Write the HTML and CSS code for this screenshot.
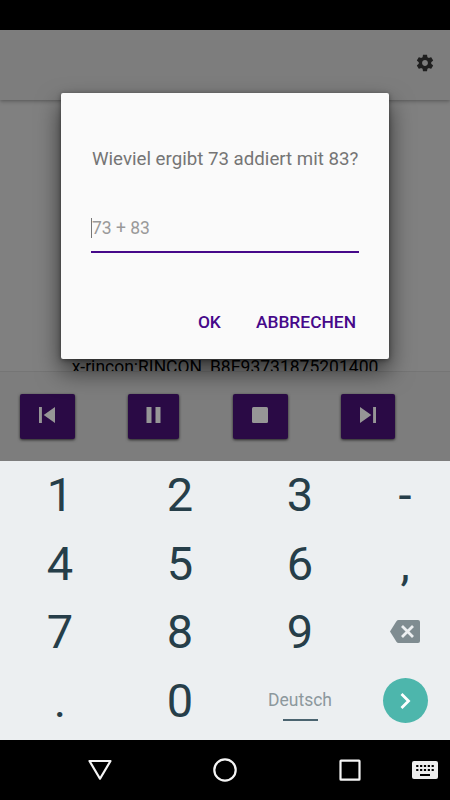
FILE: index.html
```html
<!DOCTYPE html>
<html lang="de">
<head>
	<meta charset="UTF-8">
	<title>Player</title>
	<link rel="stylesheet" href="styles.css">
</head>
<body>
	<div class="phone">
		<div class="statusbar"></div>

		<div class="app">
			<div class="header">
				<svg class="gear" viewBox="0 0 24 24"><path d="M19.43 12.98c.04-.32.07-.64.07-.98s-.03-.66-.07-.98l2.11-1.65c.19-.15.24-.42.12-.64l-2-3.46c-.12-.22-.39-.3-.61-.22l-2.49 1c-.52-.4-1.08-.73-1.69-.98l-.38-2.65C14.46 2.18 14.25 2 14 2h-4c-.25 0-.46.18-.49.42l-.38 2.65c-.61.25-1.17.59-1.69.98l-2.49-1c-.23-.09-.49 0-.61.22l-2 3.46c-.13.22-.07.49.12.64l2.11 1.65c-.04.32-.07.65-.07.98s.03.66.07.98l-2.11 1.65c-.19.15-.24.42-.12.64l2 3.46c.12.22.39.3.61.22l2.49-1c.52.4 1.08.73 1.69.98l.38 2.65c.03.24.24.42.49.42h4c.25 0 .46-.18.49-.42l.38-2.65c.61-.25 1.17-.59 1.69-.98l2.49 1c.23.09.49 0 .61-.22l2-3.46c.12-.22.07-.49-.12-.64l-2.11-1.65zM12 15.5c-1.93 0-3.5-1.57-3.5-3.5s1.57-3.5 3.5-3.5 3.5 1.57 3.5 3.5-1.57 3.5-3.5 3.5z"/></svg>
			</div>
			<div class="content">
				<p class="track">x-rincon:RINCON_B8E93731875201400</p>
			</div>
			<div class="controls">
				<button type="button" class="prev"><svg viewBox="0 0 24 24"><path d="M3 4h2.900v16H3zM7.700 12 19 20V4z"/></svg></button>
				<button type="button" class="pause"><svg viewBox="0 0 24 24"><path d="M4.500 4h5v16h-5zM13.500 4h5v16h-5z"/></svg></button>
				<button type="button" class="stop"><svg viewBox="0 0 24 24"><rect x="4" y="4" width="16" height="16" rx="1.5"/></svg></button>
				<button type="button" class="next"><svg viewBox="0 0 24 24"><path d="M4 20l11.300-8L4 4zM17.100 4H20v16h-2.900z"/></svg></button>
			</div>

			<div class="scrim">
				<div class="dialog">
					<p class="question">Wieviel ergibt 73 addiert mit 83?</p>
					<div class="field"><span class="caret"></span><span class="hint">73 + 83</span></div>
					<div class="actions">
						<span class="ok">OK</span>
						<span class="cancel">ABBRECHEN</span>
					</div>
				</div>
			</div>
		</div>

		<div class="keyboard">
			<div class="key">1</div>
			<div class="key">2</div>
			<div class="key">3</div>
			<div class="key">-</div>
			<div class="key">4</div>
			<div class="key">5</div>
			<div class="key">6</div>
			<div class="key">,</div>
			<div class="key">7</div>
			<div class="key">8</div>
			<div class="key">9</div>
			<div class="key"><svg class="delete" viewBox="0 0 30 23"><path fill="#7f8c91" d="M8.500 0H28a2 2 0 0 1 2 2v19a2 2 0 0 1-2 2H8.500Q7.300 23 6.600 22L0 11.500 6.600 1Q7.300 0 8.500 0z"/><path stroke="#eceff1" stroke-width="2.800" d="M12 6l11 11M23 6L12 17"/></svg></div>
			<div class="key">.</div>
			<div class="key">0</div>
			<div class="key space"><span class="lang">Deutsch</span></div>
			<div class="key"><span class="enter"><svg viewBox="0 0 24 24"><path fill="none" stroke="#fff" stroke-width="2.800" d="M8.500 5l7 7-7 7"/></svg></span></div>
		</div>

		<div class="navbar">
			<svg class="back" viewBox="0 0 26 26"><path d="M2.500 4h21L13 21.700z"/></svg>
			<svg class="home" viewBox="0 0 26 26"><circle cx="13" cy="13" r="10.700"/></svg>
			<svg class="recent" viewBox="0 0 26 26"><rect x="3.500" y="3.700" width="19" height="19" rx=".5"/></svg>
			<svg class="ime" viewBox="0 0 26 18"><rect width="26" height="18" rx="2" fill="#eee"/><path stroke="#000" stroke-width="2.200" stroke-dasharray="2.200 1.650" d="M4.200 5h17.800M4.200 9h17.800"/><path stroke="#000" stroke-width="2" d="M8 14h10"/></svg>
		</div>
	</div>
</body>
</html>
```
FILE: styles.css
```css
body {
	margin: 0;
	font-family: Roboto, "Liberation Sans", sans-serif;
}
p {
	margin: 0;
}
.phone {
	width: 450px;
	height: 800px;
	display: flex;
	flex-direction: column;
	overflow: hidden;
	background: #000;
}
.statusbar {
	height: 30px;
}
/* app behind the dialog */
.app {
	position: relative;
	height: 431px;
	display: flex;
	flex-direction: column;
	overflow: hidden;
	background: #d5d5d5;
}
.header {
	height: 70px;
	box-sizing: border-box;
	padding-right: 15px;
	display: flex;
	align-items: center;
	justify-content: flex-end;
	background: #d0d0d0;
	box-shadow: 0 1px 4px rgba(0,0,0,.35);
}
.gear {
	width: 20px;
	height: 20px;
	margin-top: -4px;
	fill: #353535;
}
.content {
	height: 271px;
	display: flex;
	align-items: flex-end;
	justify-content: center;
	overflow: hidden;
}
.track {
	height: 15px;
	line-height: 22px;
	font-size: 17.5px;
	white-space: nowrap;
}
.controls {
	height: 90px;
	box-sizing: border-box;
	padding: 22px 55px 22px 20px;
	display: flex;
	justify-content: space-between;
	background: #d0d0d0;
	border-top: 1px solid #c4c4c4;
}
.controls button {
	width: 55px;
	height: 45px;
	padding: 0 0 4px;
	border: 0;
	border-radius: 2px;
	display: flex;
	align-items: center;
	justify-content: center;
	background: #461273;
	box-shadow: 0 1px 3px rgba(0,0,0,.7);
}
.controls .pause {
	width: 51px;
}
.controls .next {
	width: 54px;
}
.controls svg {
	width: 24px;
	height: 24px;
	fill: #fbfbfb;
}
/* dimmed layer with the dialog */
.scrim {
	position: absolute;
	top: 0;
	left: 0;
	right: 0;
	bottom: 0;
	padding-top: 63px;
	background: rgba(0,0,0,.4);
}
.dialog {
	width: 328px;
	height: 266px;
	box-sizing: border-box;
	margin: 0 auto;
	padding: 54px 30px 0;
	border-radius: 2px;
	background: #fafafa;
	box-shadow: 0 12px 24px rgba(0,0,0,.6), 0 1px 5px rgba(0,0,0,.4);
}
.question {
	padding-left: 1px;
	line-height: 24px;
	font-size: 18.7px;
	color: #757575;
	white-space: nowrap;
}
.field {
	height: 44px;
	margin-top: 38px;
	box-sizing: border-box;
	padding-top: 9px;
	display: flex;
	align-items: flex-start;
	border-bottom: 2px solid #46098a;
}
.caret {
	width: 1px;
	height: 20px;
	background: #777;
}
.hint {
	line-height: 20px;
	font-size: 17.5px;
	color: #999;
}
.actions {
	margin-top: 58px;
	padding-right: 3px;
	display: flex;
	justify-content: flex-end;
	gap: 35px;
	line-height: 22px;
	font-size: 17.4px;
	font-weight: 500;
	color: #46098a;
}
/* numeric keyboard */
.keyboard {
	height: 279px;
	box-sizing: border-box;
	padding: 0 0 5px;
	display: grid;
	grid-template-columns: 120px 120px 120px 90px;
	grid-template-rows: repeat(4, 1fr);
	background: #eceff1;
}
.key {
	display: flex;
	align-items: center;
	justify-content: center;
	line-height: 68px;
	font-size: 47px;
	color: #263e49;
}
.delete {
	width: 30px;
	height: 23px;
	margin-bottom: 2px;
}
.lang {
	height: 35px;
	width: 120px;
	line-height: 33px;
	font-size: 17.5px;
	text-align: center;
	color: #8c989d;
}
.space {
	padding-top: 4px;
	flex-direction: column;
}
.space::after {
	content: "";
	width: 35px;
	height: 2px;
	background: #4b6470;
}
.enter {
	width: 45px;
	height: 45px;
	border-radius: 50%;
	display: flex;
	align-items: center;
	justify-content: center;
	background: #4db6ac;
}
.enter svg {
	width: 24px;
	height: 24px;
}
.navbar {
	height: 60px;
	padding: 0 12px 0 87px;
	display: flex;
	align-items: center;
}
.navbar svg {
	width: 26px;
	height: 26px;
	fill: none;
	stroke: #f5f5f5;
	stroke-width: 2.200;
	stroke-linejoin: round;
}
.navbar .home,
.navbar .recent {
	margin-left: 99px;
}
.navbar .ime {
	height: 18px;
	margin-left: auto;
	stroke: none;
}
```
